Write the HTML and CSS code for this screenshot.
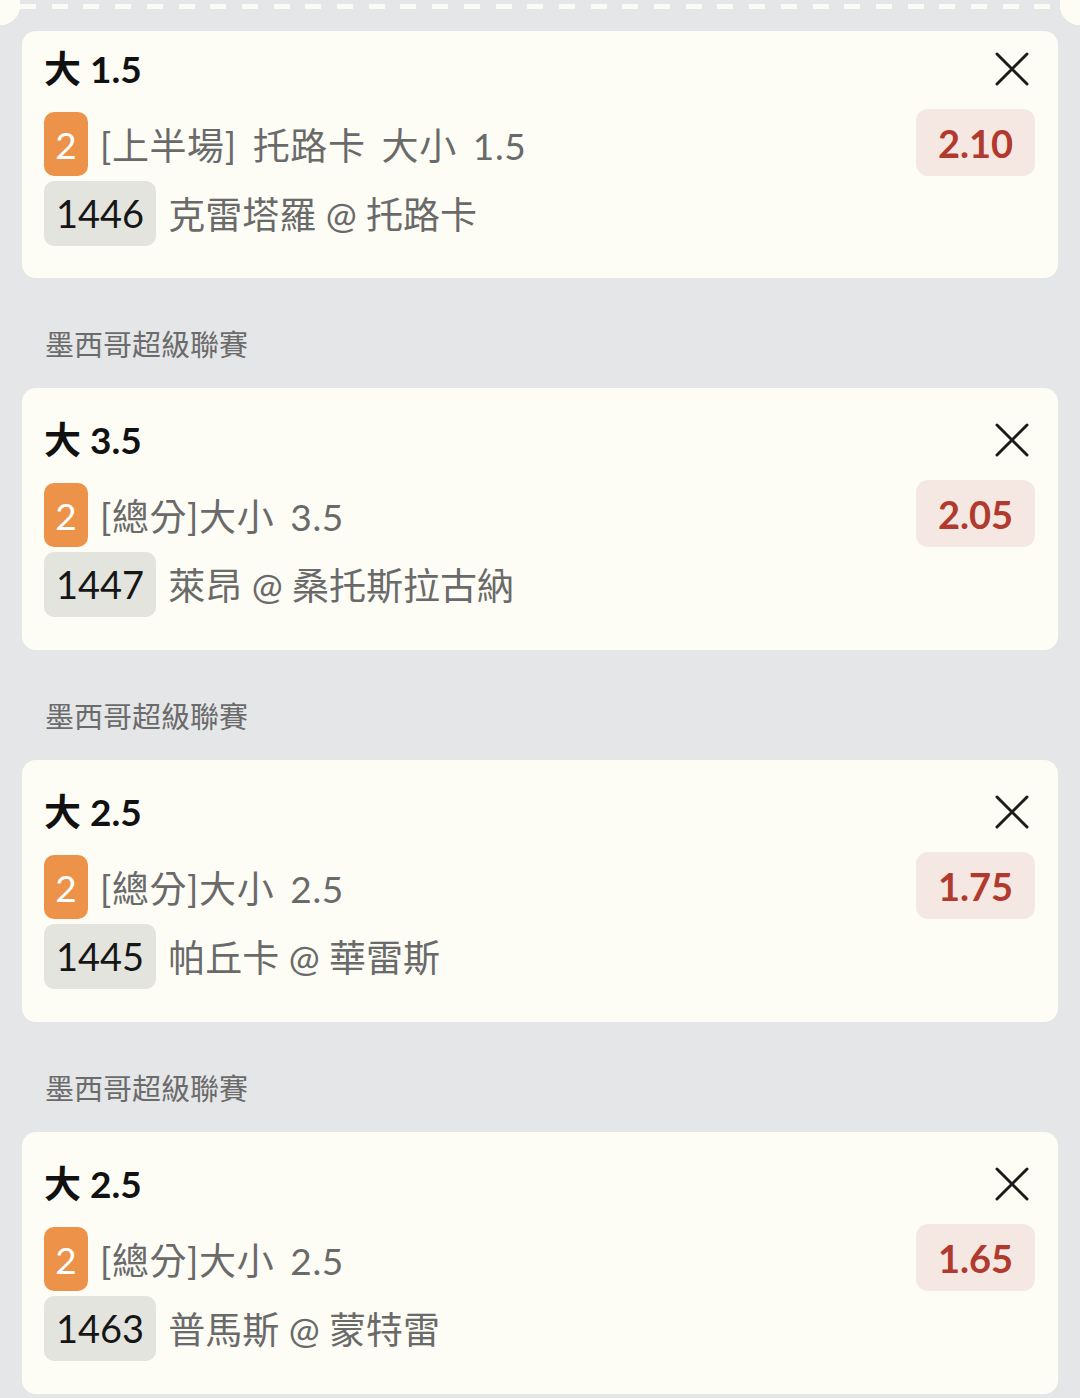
FILE: index.html
```html
<!DOCTYPE html>
<html lang="zh-Hant">
<head>
<meta charset="utf-8">
<title>Bet slip</title>
<link rel="stylesheet" href="styles.css">
</head>
<body>
<div class="page">
  <div class="perf"><div class="dashes"></div></div>

  <div class="card card-first">
    <div class="head">
      <div class="title">大 1.5</div>
      <svg class="close" viewBox="0 0 34 34"><path d="M2 2 L32 32 M32 2 L2 32"/></svg>
    </div>
    <div class="body">
      <div class="lines">
        <div class="line"><span class="badge-o">2</span><span class="text market">[上半場] 托路卡 大小 1.5</span></div>
        <div class="line"><span class="badge-g">1446</span><span class="text">克雷塔羅 @ 托路卡</span></div>
      </div>
      <div class="odds">2.10</div>
    </div>
  </div>

  <div class="league">墨西哥超級聯賽</div>
  <div class="card">
    <div class="head">
      <div class="title">大 3.5</div>
      <svg class="close" viewBox="0 0 34 34"><path d="M2 2 L32 32 M32 2 L2 32"/></svg>
    </div>
    <div class="body">
      <div class="lines">
        <div class="line"><span class="badge-o">2</span><span class="text market">[總分]大小 3.5</span></div>
        <div class="line"><span class="badge-g">1447</span><span class="text">萊昂 @ 桑托斯拉古納</span></div>
      </div>
      <div class="odds">2.05</div>
    </div>
  </div>

  <div class="league">墨西哥超級聯賽</div>
  <div class="card">
    <div class="head">
      <div class="title">大 2.5</div>
      <svg class="close" viewBox="0 0 34 34"><path d="M2 2 L32 32 M32 2 L2 32"/></svg>
    </div>
    <div class="body">
      <div class="lines">
        <div class="line"><span class="badge-o">2</span><span class="text market">[總分]大小 2.5</span></div>
        <div class="line"><span class="badge-g">1445</span><span class="text">帕丘卡 @ 華雷斯</span></div>
      </div>
      <div class="odds">1.75</div>
    </div>
  </div>

  <div class="league">墨西哥超級聯賽</div>
  <div class="card">
    <div class="head">
      <div class="title">大 2.5</div>
      <svg class="close" viewBox="0 0 34 34"><path d="M2 2 L32 32 M32 2 L2 32"/></svg>
    </div>
    <div class="body">
      <div class="lines">
        <div class="line"><span class="badge-o">2</span><span class="text market">[總分]大小 2.5</span></div>
        <div class="line"><span class="badge-g">1463</span><span class="text">普馬斯 @ 蒙特雷</span></div>
      </div>
      <div class="odds">1.65</div>
    </div>
  </div>
</div>
</body>
</html>
```

FILE: styles.css
```css
html, body {
  margin: 0;
  padding: 0;
  background: #e5e6e8;
}

.page {
  width: 1080px;
  min-height: 1398px;
  background: #e5e6e8;
  font-family: Lato, "Noto Sans CJK TC", sans-serif;
  overflow: hidden;
}

.perf {
  height: 31px;
  padding: 4px 20px 0;
  box-sizing: border-box;
  background:
    radial-gradient(circle at 0 5px, #fdfdf6 0 20px, transparent 20.5px),
    radial-gradient(circle at 100% 5px, #fdfdf6 0 20px, transparent 20.5px);
}

.dashes {
  height: 5px;
  background: repeating-linear-gradient(90deg, #fbfbf6 0 16px, transparent 16px 31.7px);
}

.card {
  margin: 0 22px;
  background: #fdfdf6;
  border-radius: 14px;
  padding: 30px 23px 34px 22px;
}

.card-first {
  padding-top: 16px;
  padding-bottom: 33px;
}

.head {
  display: flex;
  justify-content: space-between;
  align-items: center;
  height: 44px;
}

.title {
  font-size: 37px;
  font-weight: 700;
  line-height: 44px;
  color: #111;
}

.close {
  width: 34px;
  height: 34px;
  margin-right: 6px;
}

.close path {
  stroke: #1c1c1c;
  stroke-width: 3;
  stroke-linecap: round;
  fill: none;
}

.body {
  display: flex;
  justify-content: space-between;
  align-items: flex-start;
  margin-top: 21px;
}

.lines {
  display: flex;
  flex-direction: column;
  gap: 5px;
}

.line {
  display: flex;
  align-items: center;
  gap: 12px;
  height: 64px;
}

.badge-o {
  display: flex;
  align-items: center;
  justify-content: center;
  width: 44px;
  height: 64px;
  border-radius: 10px;
  background: #ec9349;
  color: #fff;
  font-size: 37px;
}

.badge-g {
  display: flex;
  align-items: center;
  height: 65px;
  padding: 0 12px;
  border-radius: 10px;
  background: #e4e4df;
  color: #161616;
  font-size: 38px;
}

.text {
  font-size: 37px;
  color: #6a6a6a;
  white-space: nowrap;
}

.market {
  word-spacing: 6px;
  letter-spacing: 0.6px;
}

.odds {
  display: flex;
  align-items: center;
  justify-content: center;
  width: 119px;
  height: 67px;
  margin-top: -3px;
  border-radius: 12px;
  background: #f5e7e2;
  color: #b03a2e;
  font-size: 38px;
  font-weight: 700;
}

.league {
  padding: 47px 0 23px 45px;
  font-size: 29px;
  line-height: 40px;
  color: #6b6b6b;
}
```
